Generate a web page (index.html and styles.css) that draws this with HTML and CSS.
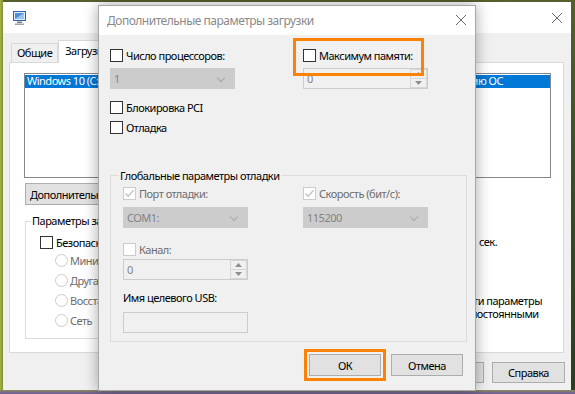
FILE: index.html
```html
<!DOCTYPE html>
<html lang="ru">
<head>
    <meta charset="UTF-8">
    <meta name="viewport" content="width=device-width, initial-scale=1.0">
    <title>Дополнительные параметры загрузки</title>
    <link rel="stylesheet" href="styles.css">
</head>
<body>
    <!-- окно "Конфигурация системы" позади -->
    <div class="window">
        <div class="titlebar">
            <svg class="app-icon" width="16" height="16" viewBox="0 0 16 16">
                <rect x="1.5" y="1.5" width="12" height="9" fill="#dcebf9" stroke="#2f62b0"/>
                <path d="M3 3h9v6H3z" fill="#4f8fd6"/>
                <path d="M3 9L12 3v6z" fill="#9cc4ee"/>
                <path d="M5 11.5h5v1.5H5z" fill="#7d7d7d"/>
                <path d="M3 13.5h9v1.5H3z" fill="#a3a3a3"/>
            </svg>
            <svg class="close" width="10" height="10" viewBox="0 0 10 10">
                <path d="M0 0L10 10M10 0L0 10" stroke="#6b6b6b" stroke-width="1"/>
            </svg>
        </div>
        <div class="window-body">
            <div class="tabs">
                <div class="tab">Общие</div>
                <div class="tab active">Загрузка</div>
                <div class="tab">Службы</div>
            </div>
            <div class="tab-panel">
                <div class="os-list">
                    <div class="os-item selected">
                        <span>Windows 10 (C:\WINDOWS) : Текущая ОС;</span>
                        <span>Загружаемая по умолчанию ОС</span>
                    </div>
                </div>
                <button class="btn btn-wide">Дополнительные параметры...</button>
                <div class="boot-options">
                    <fieldset class="group boot-group">
                        <legend>Параметры загрузки</legend>
                        <label class="check"><span class="box"></span>Безопасный режим</label>
                        <label class="radio"><span class="dot"></span>Минимальная</label>
                        <label class="radio"><span class="dot"></span>Другая оболочка</label>
                        <label class="radio"><span class="dot"></span>Восстановление Active Directory</label>
                        <label class="radio"><span class="dot"></span>Сеть</label>
                    </fieldset>
                    <div class="timeout-col">
                        <div class="timeout">
                            <span class="timeout-label">Таймаут:</span>
                            <span class="timeout-field">30</span>
                            <span>сек.</span>
                        </div>
                        <label class="check persist"><span class="box"></span><span>Сделать эти параметры<br>загрузки постоянными</span></label>
                    </div>
                </div>
            </div>
            <div class="window-buttons">
                <button class="btn">ОК</button>
                <button class="btn">Отмена</button>
                <button class="btn">Применить</button>
                <button class="btn">Справка</button>
            </div>
        </div>
    </div>

    <!-- диалог поверх -->
    <div class="dialog">
        <div class="dialog-title">
            <span>Дополнительные параметры загрузки</span>
            <svg class="close" width="10" height="10" viewBox="0 0 10 10">
                <path d="M0 0L10 10M10 0L0 10" stroke="#6b6b6b" stroke-width="1"/>
            </svg>
        </div>
        <div class="dialog-body">
            <div class="top-grid">
                <div class="col">
                    <label class="check"><span class="box"></span>Число процессоров:</label>
                    <div class="combo disabled">1<span class="chevron"></span></div>
                    <label class="check pci"><span class="box"></span>Блокировка PCI</label>
                    <label class="check debug"><span class="box"></span>Отладка</label>
                </div>
                <div class="col">
                    <label class="check marked"><span class="box"></span>Максимум памяти:</label>
                    <div class="spin">
                        <span class="spin-value">0</span>
                        <span class="spin-arrows">
                            <span class="arrow"><svg width="7" height="4" viewBox="0 0 7 4"><path d="M0 4L3.5 0L7 4z" fill="#8f8f8f"/></svg></span>
                            <span class="arrow"><svg width="7" height="4" viewBox="0 0 7 4"><path d="M0 0L3.5 4L7 0z" fill="#8f8f8f"/></svg></span>
                        </span>
                    </div>
                </div>
            </div>

            <fieldset class="group debug-group">
                <legend>Глобальные параметры отладки</legend>
                <div class="debug-grid">
                    <label class="check disabled"><span class="box"><svg width="11" height="11" viewBox="0 0 11 11"><path d="M1.5 5.5L4.2 8.3L9.5 2.2" fill="none" stroke="#c2c2c2" stroke-width="1.3"/></svg></span>Порт отладки:</label>
                    <label class="check disabled"><span class="box"><svg width="11" height="11" viewBox="0 0 11 11"><path d="M1.5 5.5L4.2 8.3L9.5 2.2" fill="none" stroke="#c2c2c2" stroke-width="1.3"/></svg></span>Скорость (бит/с):</label>
                    <div class="combo disabled combo-low">COM1:<span class="chevron"></span></div>
                    <div class="combo disabled combo-low">115200<span class="chevron"></span></div>
                </div>
                <label class="check disabled channel"><span class="box"></span>Канал:</label>
                <div class="spin spin-low">
                    <span class="spin-value">0</span>
                    <span class="spin-arrows">
                        <span class="arrow"><svg width="7" height="4" viewBox="0 0 7 4"><path d="M0 4L3.5 0L7 4z" fill="#8f8f8f"/></svg></span>
                        <span class="arrow"><svg width="7" height="4" viewBox="0 0 7 4"><path d="M0 0L3.5 4L7 0z" fill="#8f8f8f"/></svg></span>
                    </span>
                </div>
                <div class="usb-label">Имя целевого USB:</div>
                <div class="textbox"></div>
            </fieldset>

            <div class="dialog-buttons">
                <button class="btn btn-ok">ОК</button>
                <button class="btn">Отмена</button>
            </div>
        </div>
    </div>
</body>
</html>
```

FILE: styles.css
```css
* {
    box-sizing: border-box;
}

body {
    margin: 0;
    width: 575px;
    height: 394px;
    overflow: hidden;
    position: relative;
    padding: 2px 4px 4px 3px;
    font-family: "Noto Sans", "Segoe UI", sans-serif;
    font-size: 11px;
    letter-spacing: -0.5px;
    color: #000;
    background:
        linear-gradient(to top, #6a5c94 0, #7c6d86 2px, #8d8f4c 4px, transparent 4px),
        linear-gradient(to right, #a9b443 0, #7f8e37 3px, transparent 3px),
        linear-gradient(to bottom, #55602c, #3a4a26 50%, #2e3d22);
}

button {
    font: inherit;
    letter-spacing: inherit;
    color: #000;
}

/* back window */
.window {
    height: 388px;
    background: #f0f0f0;
    display: flex;
    flex-direction: column;
}

.titlebar {
    height: 31px;
    background: #fff;
    display: flex;
    align-items: center;
    justify-content: space-between;
    padding: 1px 9px 0 9px;
}

.window-body {
    flex: 1;
    padding: 7px 7px 0 6px;
    display: flex;
    flex-direction: column;
}

.tabs {
    display: flex;
    align-items: flex-end;
    height: 22px;
    padding-left: 2px;
}

.tab {
    height: 19px;
    line-height: 17px;
    padding: 0 5px;
    border: 1px solid #d9d9d9;
    border-bottom: none;
    background: #f0f0f0;
}

.tab.active {
    height: 23px;
    line-height: 20px;
    padding: 0 6px;
    background: #fff;
    margin-bottom: -1px;
    position: relative;
    z-index: 1;
}

.tab-panel {
    height: 291px;
    background: #fff;
    border: 1px solid #d9d9d9;
    padding: 10px 12px 0 14px;
}

.os-list {
    height: 105px;
    border: 1px solid #828790;
    padding-top: 1px;
}

.os-item {
    display: flex;
    justify-content: space-between;
    height: 13px;
    line-height: 12px;
    padding: 0 47px 0 2px;
    white-space: nowrap;
    overflow: hidden;
}

.os-item.selected {
    background: #0078d7;
    color: #fff;
}

.btn {
    height: 22px;
    padding: 0 6px;
    background: #e1e1e1;
    border: 1px solid #adadad;
    border-radius: 0;
    text-align: center;
    white-space: nowrap;
}

.btn-wide {
    display: block;
    margin: 5px 0 0 1px;
    width: 170px;
    text-align: left;
    padding-left: 4px;
}

.boot-options {
    display: flex;
    margin-top: 8px;
}

.group {
    margin: 0;
    border: 1px solid #dcdcdc;
    min-width: 0;
}

.group legend {
    padding: 0 1px;
    line-height: 16px;
}

.boot-group {
    flex: none;
    width: 330px;
    height: 126px;
    margin-left: 1px;
    padding: 6px 0 0 14px;
}

.boot-group legend {
    margin-left: -9px;
}

.check {
    display: flex;
    align-items: center;
    height: 15px;
    white-space: nowrap;
}

.box {
    width: 13px;
    height: 13px;
    flex: none;
    border: 1px solid #333;
    background: #fff;
    margin-right: 3px;
    display: flex;
    align-items: center;
    justify-content: center;
}

.radio {
    display: flex;
    align-items: center;
    height: 20px;
    padding-left: 15px;
    color: #6d6d6d;
    white-space: nowrap;
}

.boot-group .radio:first-of-type {
    margin-top: 4px;
}

.dot {
    width: 13px;
    height: 13px;
    border: 1px solid #cccccc;
    border-radius: 50%;
    background: #fff;
    margin-right: 2px;
}

.timeout-col {
    flex: none;
    margin-left: 25px;
    width: 171px;
}

.timeout {
    display: flex;
    align-items: center;
    height: 22px;
    margin-top: 17px;
    white-space: nowrap;
}

.timeout-label {
    width: 40px;
    flex: none;
    overflow: hidden;
}

.timeout-field {
    width: 53px;
    flex: none;
    height: 20px;
    margin-right: 6px;
    border: 1px solid #7a7a7a;
}

.persist {
    height: auto;
    align-items: flex-start;
    margin-top: 42px;
    padding-left: 29px;
    line-height: 13px;
}

.persist .box {
    margin-right: 4px;
}

.window-buttons {
    display: flex;
    justify-content: flex-end;
    gap: 8px;
    margin: 9px -1px 0 0;
}

.window-buttons .btn {
    width: 73px;
    height: 21px;
}

/* dialog */
.dialog {
    position: absolute;
    z-index: 10;
    left: 98px;
    top: 5px;
    width: 378px;
    height: 386px;
    background: #f0f0f0;
    border: 1px solid #a8a8a8;
    box-shadow: 0 0 14px rgba(0, 0, 0, 0.35);
}

.dialog-title {
    height: 29px;
    background: #fff;
    display: flex;
    align-items: center;
    justify-content: space-between;
    padding: 0 9px 1px 8px;
    color: #8a8a8a;
    font-size: 12px;
}

.dialog-body {
    padding: 13px 8px 0 11px;
}

.top-grid {
    display: grid;
    grid-template-columns: 125px 125px;
    column-gap: 68px;
}

.combo {
    position: relative;
    height: 21px;
    margin-top: 5px;
    padding-left: 3px;
    line-height: 19px;
    border: 1px solid #cccccc;
    background: #cccccc;
    color: #838383;
}

.chevron {
    position: absolute;
    right: 10px;
    top: 6px;
    width: 6px;
    height: 6px;
    border-right: 1px solid #a8a8a8;
    border-bottom: 1px solid #a8a8a8;
    transform: rotate(45deg);
}

.pci {
    margin-top: 11px;
}

.debug {
    margin-top: 5px;
}

.marked {
    position: relative;
}

.marked::after,
.btn-ok::after {
    content: "";
    position: absolute;
    border: 3px solid #fb8207;
}

.marked::after {
    left: -10px;
    top: -10px;
    width: 125px;
    height: 32px;
}

.spin {
    display: flex;
    height: 21px;
    margin-top: 5px;
    border: 1px solid #cccccc;
    background: #f0f0f0;
    color: #838383;
}

.spin-value {
    flex: 1;
    padding-left: 3px;
    line-height: 19px;
}

.spin-arrows {
    width: 17px;
    display: flex;
    flex-direction: column;
}

.arrow {
    flex: 1;
    display: flex;
    align-items: center;
    justify-content: center;
    border: 1px solid #d6d6d6;
    background: #f0f0f0;
}

.arrow + .arrow {
    border-top: none;
}

.debug-group {
    width: 357px;
    height: 175px;
    margin-top: 32px;
    padding: 3px 0 0 12px;
}

.debug-group legend {
    margin-left: -4px;
    position: relative;
    top: 1px;
}

.debug-grid {
    display: grid;
    grid-template-columns: 125px 125px;
    column-gap: 55px;
}

.check.disabled {
    color: #6d6d6d;
}

.check.disabled .box {
    border-color: #cccccc;
}

.combo-low {
    margin-top: 6px;
}

.channel {
    margin-top: 14px;
}

.spin-low {
    width: 125px;
    margin-top: 2px;
}

.usb-label {
    margin-top: 10px;
    line-height: 16px;
}

.textbox {
    width: 125px;
    height: 21px;
    margin-top: 6px;
    border: 1px solid #cccccc;
    background: #f0f0f0;
}

.dialog-buttons {
    display: flex;
    justify-content: flex-end;
    gap: 10px;
    margin-top: 12px;
    padding-right: 4px;
}

.dialog-buttons .btn {
    width: 72px;
}

.btn-ok {
    position: relative;
}

.btn-ok::after {
    left: -6px;
    top: -6px;
    right: -6px;
    bottom: -6px;
}
```
